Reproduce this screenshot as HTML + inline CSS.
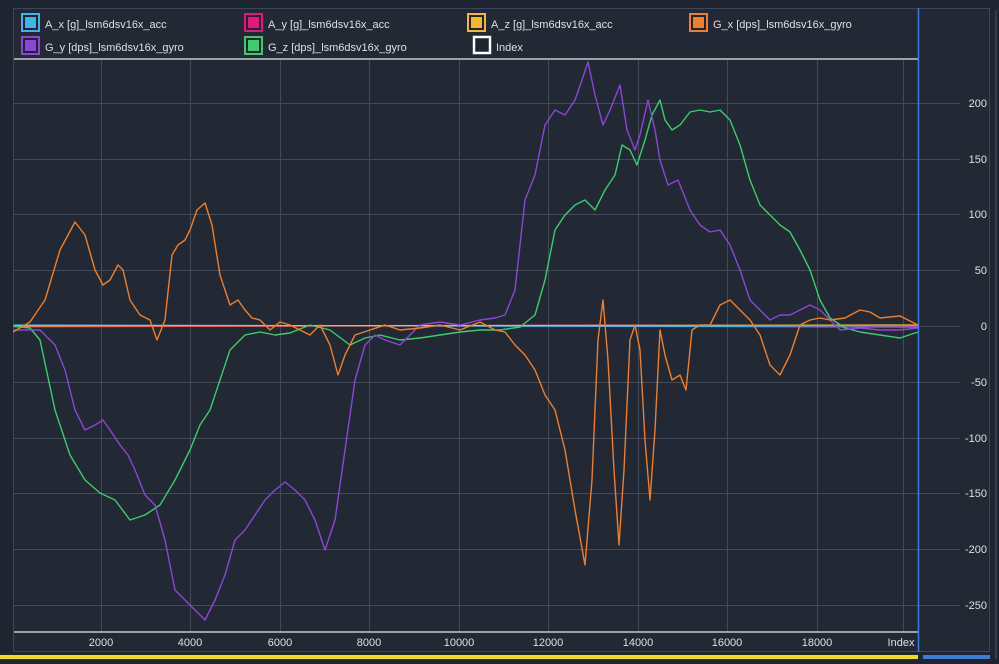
<!DOCTYPE html>
<html><head><style>
body{margin:0;width:999px;height:659px;background:#1f2530;overflow:hidden;font-family:"Liberation Sans",sans-serif}
</style></head><body>
<svg width="999" height="659" xmlns="http://www.w3.org/2000/svg" font-family="Liberation Sans, sans-serif">
<rect width="999" height="659" fill="#1f2530"/>
<rect x="13.5" y="8.5" width="976" height="643" fill="#222834" stroke="#3a4660"/>
<line x1="996" y1="10" x2="996" y2="659" stroke="#4a5060"/>
<g font-size="11" fill="#dde0e6">
<rect x="22" y="14" width="17" height="17" fill="#1f2530" stroke="#3eb4e8" stroke-width="2"/><rect x="25" y="17" width="11" height="11" fill="#3eb4e8"/><text x="45" y="28">A_x [g]_lsm6dsv16x_acc</text>
<rect x="245" y="14" width="17" height="17" fill="#1f2530" stroke="#e8157a" stroke-width="2"/><rect x="248" y="17" width="11" height="11" fill="#e8157a"/><text x="268" y="28">A_y [g]_lsm6dsv16x_acc</text>
<rect x="468" y="14" width="17" height="17" fill="#1f2530" stroke="#f5b82a" stroke-width="2"/><rect x="471" y="17" width="11" height="11" fill="#f5b82a"/><text x="491" y="28">A_z [g]_lsm6dsv16x_acc</text>
<rect x="690" y="14" width="17" height="17" fill="#1f2530" stroke="#f07e2a" stroke-width="2"/><rect x="693" y="17" width="11" height="11" fill="#f07e2a"/><text x="713" y="28">G_x [dps]_lsm6dsv16x_gyro</text>
<rect x="22" y="37" width="17" height="17" fill="#1f2530" stroke="#8c46d6" stroke-width="2"/><rect x="25" y="40" width="11" height="11" fill="#8c46d6"/><text x="45" y="51">G_y [dps]_lsm6dsv16x_gyro</text>
<rect x="245" y="37" width="17" height="17" fill="#1f2530" stroke="#3ccc6c" stroke-width="2"/><rect x="248" y="40" width="11" height="11" fill="#3ccc6c"/><text x="268" y="51">G_z [dps]_lsm6dsv16x_gyro</text>
<rect x="474" y="37" width="16" height="16" fill="#1f2530" stroke="#ffffff" stroke-width="2.5"/><text x="496" y="51">Index</text>
</g>
<line x1="14" y1="59" x2="918" y2="59" stroke="#c8c8c8" stroke-width="1.5"/>
<g stroke="#434b5a" stroke-width="1">
<line x1="101.5" y1="60" x2="101.5" y2="632"/><line x1="190.5" y1="60" x2="190.5" y2="632"/><line x1="280.5" y1="60" x2="280.5" y2="632"/><line x1="369.5" y1="60" x2="369.5" y2="632"/><line x1="459.5" y1="60" x2="459.5" y2="632"/><line x1="548.5" y1="60" x2="548.5" y2="632"/><line x1="638.5" y1="60" x2="638.5" y2="632"/><line x1="727.5" y1="60" x2="727.5" y2="632"/><line x1="817.5" y1="60" x2="817.5" y2="632"/><line x1="903.5" y1="60" x2="903.5" y2="632"/>
<line x1="14" y1="103.5" x2="960" y2="103.5"/><line x1="14" y1="159.5" x2="960" y2="159.5"/><line x1="14" y1="214.5" x2="960" y2="214.5"/><line x1="14" y1="270.5" x2="960" y2="270.5"/><line x1="14" y1="326.5" x2="960" y2="326.5"/><line x1="14" y1="382.5" x2="960" y2="382.5"/><line x1="14" y1="438.5" x2="960" y2="438.5"/><line x1="14" y1="493.5" x2="960" y2="493.5"/><line x1="14" y1="549.5" x2="960" y2="549.5"/><line x1="14" y1="605.5" x2="960" y2="605.5"/>
</g>
<line x1="14" y1="632" x2="918" y2="632" stroke="#c8c8c8" stroke-width="1.5"/>
<line x1="918.5" y1="8" x2="918.5" y2="652" stroke="#3a7be0" stroke-width="1.5"/>
<rect x="0" y="655" width="918" height="4" fill="#f5e000"/>
<rect x="923" y="655" width="67" height="4" fill="#3a7be0"/>
<g font-size="11" fill="#dde0e6" text-anchor="end">
<text x="987" y="107">200</text><text x="987" y="163">150</text><text x="987" y="218">100</text><text x="987" y="274">50</text><text x="987" y="330">0</text><text x="987" y="386">-50</text><text x="987" y="442">-100</text><text x="987" y="497">-150</text><text x="987" y="553">-200</text><text x="987" y="609">-250</text>
</g>
<g font-size="11" fill="#dde0e6" text-anchor="middle">
<text x="101" y="646">2000</text><text x="190" y="646">4000</text><text x="280" y="646">6000</text><text x="369" y="646">8000</text><text x="459" y="646">10000</text><text x="548" y="646">12000</text><text x="638" y="646">14000</text><text x="727" y="646">16000</text><text x="817" y="646">18000</text><text x="901" y="646">Index</text>
</g>
<g stroke-linejoin="round">
<polyline fill="none" stroke="#3eb4e8" stroke-width="1.2" points="14,325 918,327"/>
<polyline fill="none" stroke="#e8157a" stroke-width="1.2" points="14,327 300,326 600,325 918,326"/>
<polyline fill="none" stroke="#f5b82a" stroke-width="1.2" points="14,326 918,325"/>
<polyline fill="none" stroke="#3ccc6c" stroke-width="1.4" points="13,326 30,328 40,340 55,410 70,455 85,480 100,493 115,500 130,520 145,515 160,505 175,480 190,450 200,425 210,410 220,380 230,350 245,335 260,332 275,335 290,333 310,325 330,330 350,345 365,338 380,335 400,340 420,338 440,335 460,332 480,330 500,330 520,327 535,315 545,280 555,230 565,215 575,205 585,200 595,210 605,190 615,175 622,145 630,150 637,165 645,140 652,115 660,100 665,120 672,130 680,125 690,112 700,110 710,112 720,110 730,120 740,145 750,180 760,205 770,215 780,225 790,232 800,250 810,270 820,300 830,318 845,328 860,332 880,335 900,338 918,332"/>
<polyline fill="none" stroke="#8c46d6" stroke-width="1.4" points="13,330 40,330 55,345 65,370 75,410 85,430 95,425 103,420 110,430 120,445 128,455 135,470 145,495 155,505 165,540 175,590 185,600 195,610 205,620 215,600 225,575 235,540 245,530 255,515 265,500 275,490 285,482 295,490 305,500 315,520 325,550 335,520 345,450 355,380 365,345 375,335 385,340 400,345 420,325 440,322 460,325 480,320 495,318 505,315 515,290 525,200 535,175 545,125 555,110 565,115 575,100 582,80 588,62 595,95 603,125 610,110 620,85 627,130 635,150 640,135 648,100 655,130 660,160 668,185 678,180 690,210 700,225 710,232 720,230 730,245 740,270 750,300 760,310 770,320 780,315 790,315 800,310 810,305 820,310 830,320 840,330 860,328 880,330 900,330 918,328"/>
<polyline fill="none" stroke="#f07e2a" stroke-width="1.4" points="13,332 30,322 45,300 60,250 75,222 85,235 95,270 103,285 110,280 118,265 123,270 130,300 140,315 150,320 157,340 165,320 172,255 178,245 185,240 190,230 197,210 205,203 212,225 220,275 230,305 238,300 245,310 252,318 260,320 270,330 280,322 290,325 300,330 310,335 320,325 330,345 338,375 345,355 355,335 370,330 385,325 400,330 420,328 440,325 460,330 480,322 495,330 505,332 515,345 525,355 535,370 545,395 555,410 565,450 575,510 585,565 592,480 598,340 603,300 608,360 614,470 619,545 624,470 630,340 635,325 640,350 645,440 650,500 655,430 660,330 665,355 672,380 680,375 686,390 692,330 700,325 710,325 720,305 730,300 740,310 750,320 760,335 770,365 780,375 790,355 800,325 810,320 820,318 830,320 845,318 860,310 870,312 880,318 900,316 918,325"/>
</g>
</svg>
</body></html>
